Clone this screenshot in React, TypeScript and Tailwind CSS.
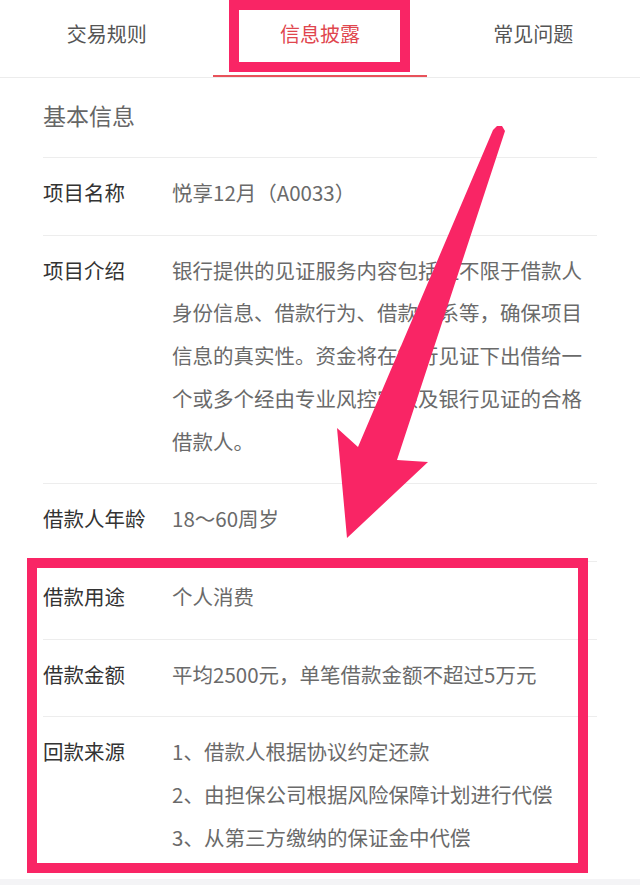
import React from "react";

const font = { fontFamily: '"Noto Sans CJK SC", "Noto Sans", sans-serif' };

const tabs = ["交易规则", "信息披露", "常见问题"];

const rows: { label: string; lines: string[] }[] = [
  { label: "项目名称", lines: ["悦享12月（A0033）"] },
  {
    label: "项目介绍",
    lines: [
      "银行提供的见证服务内容包括但不限于借款人身份信息、借款行为、借款关系等，确保项目信息的真实性。资金将在银行见证下出借给一个或多个经由专业风控审核及银行见证的合格借款人。",
    ],
  },
  { label: "借款人年龄", lines: ["18～60周岁"] },
  { label: "借款用途", lines: ["个人消费"] },
  { label: "借款金额", lines: ["平均2500元，单笔借款金额不超过5万元"] },
  {
    label: "回款来源",
    lines: [
      "1、借款人根据协议约定还款",
      "2、由担保公司根据风险保障计划进行代偿",
      "3、从第三方缴纳的保证金中代偿",
    ],
  },
];

export default function App() {
  return (
    <div className="relative min-h-screen w-full bg-[#f4f4f6]" style={font}>
      {/* tab bar */}
      <div className="flex bg-white border-b border-[#ececec]">
        {tabs.map((t, i) => (
          <div
            key={t}
            className={`flex-1 h-[77px] flex items-start justify-center pt-[19px] text-[20px] leading-[30px] ${
              i === 1 ? "text-[#e0464e] border-b-2 border-[#e8525a]" : "text-[#555]"
            }`}
          >
            {t}
          </div>
        ))}
      </div>

      {/* content */}
      <div className="bg-white px-[43px]">
        <div className="h-[79px] flex items-center pb-[4px] text-[23px] text-[#666]">基本信息</div>
        {rows.map((r) => (
          <div
            key={r.label}
            className="flex border-t border-[#ededed] pt-[13px] pb-[21px] text-[20.5px] leading-[42.7px]"
          >
            <div className="w-[129px] shrink-0 text-[#333]">{r.label}</div>
            <div className="flex-1 text-[#6a6a6a]">
              {r.lines.map((l) => (
                <div key={l}>{l}</div>
              ))}
            </div>
          </div>
        ))}
      </div>

      {/* annotation: box around active tab */}
      <div className="absolute left-[229px] top-0 w-[181px] h-[72px] border-[10px] border-[#f92565] pointer-events-none" />
      {/* annotation: box around last rows */}
      <div className="absolute left-[27px] top-[558px] w-[561px] h-[315px] border-[10px] border-[#f92565] pointer-events-none" />
      {/* annotation: arrow */}
      <svg
        className="absolute left-0 top-0 pointer-events-none"
        width="640"
        height="885"
        viewBox="0 0 640 885"
      >
        <polygon
          fill="#f92565"
          points="493,130 497,126 502,126 505,131 397,460 428,462 347,538 337,428 358,447"
        />
      </svg>
    </div>
  );
}
